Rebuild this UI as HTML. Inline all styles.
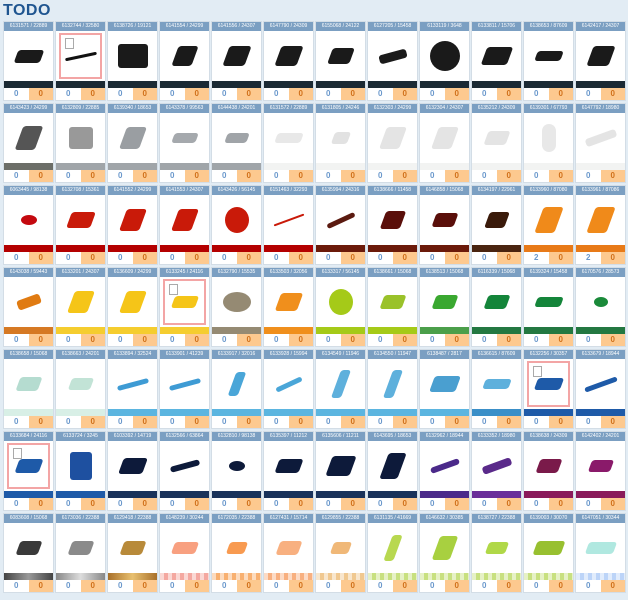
<!DOCTYPE html>
<html><head><meta charset="utf-8"><style>
*{margin:0;padding:0;box-sizing:border-box}
html,body{width:628px;height:600px;overflow:hidden;background:#e2ecf4;font-family:"Liberation Sans",sans-serif}
h1{position:absolute;left:3px;top:2px;font-size:16px;font-weight:bold;color:#1f5590;letter-spacing:0.5px}
.g{position:absolute;left:4px;top:22px;display:grid;grid-template-columns:repeat(12,49px);grid-auto-rows:78px;column-gap:3px;row-gap:4px}
.c{background:#fff;display:flex;flex-direction:column;box-shadow:0 0 0 1px #d3dde6}
.h{height:9px;background:#7b9fc2;color:#fff;font-size:5px;line-height:9px;text-align:center;white-space:nowrap;overflow:hidden}
.i{height:50px;background:#fff;position:relative;display:flex;align-items:center;justify-content:center}
.i i{display:block;width:26px;height:13px;border-radius:3px;transform:skewX(-20deg)}
.p{position:absolute;left:3px;top:2px;right:3px;bottom:2px;border:2px solid #f3a5a5;background:#fff}
.p::after{content:"";position:absolute;left:4px;top:3px;width:7px;height:9px;border:1px solid #aaa}
.b{height:7px}
.ck{background:repeating-linear-gradient(90deg,rgba(255,255,255,.55) 0 4px,transparent 4px 8px)}
.n{height:12px;display:flex;font-size:8px;font-weight:bold;line-height:12px;text-align:center}
.n span:first-child{flex:1;color:#6a98cc;background:#fff}
.n span:last-child{flex:1;color:#d0701a;background:#fdc98f}
</style></head><body>
<h1>TODO</h1>
<div class="g">
<!-- row 1 -->
<div class="c"><div class="h">6131571 / 22889</div><div class="i"><i style="background:#1a1a1a"></i></div><div class="b" style="background:#1b2a34"></div><div class="n"><span>0</span><span>0</span></div></div>
<div class="c"><div class="h">6132744 / 32580</div><div class="i"><div class="p"></div><i style="background:#111;height:3px;width:32px;position:relative;transform:rotate(-12deg)"></i></div><div class="b" style="background:#1b2a34"></div><div class="n"><span>0</span><span>0</span></div></div>
<div class="c"><div class="h">6138726 / 19121</div><div class="i"><i style="background:#1a1a1a;width:30px;height:24px;transform:none"></i></div><div class="b" style="background:#1b2a34"></div><div class="n"><span>0</span><span>0</span></div></div>
<div class="c"><div class="h">6141554 / 24299</div><div class="i"><i style="background:#1a1a1a;width:20px;height:20px"></i></div><div class="b" style="background:#1b2a34"></div><div class="n"><span>0</span><span>0</span></div></div>
<div class="c"><div class="h">6141556 / 24307</div><div class="i"><i style="background:#1a1a1a;width:22px;height:20px"></i></div><div class="b" style="background:#1b2a34"></div><div class="n"><span>0</span><span>0</span></div></div>
<div class="c"><div class="h">6147790 / 24309</div><div class="i"><i style="background:#1a1a1a;width:22px;height:20px"></i></div><div class="b" style="background:#1b2a34"></div><div class="n"><span>0</span><span>0</span></div></div>
<div class="c"><div class="h">6155068 / 24122</div><div class="i"><i style="background:#1a1a1a;width:22px;height:16px"></i></div><div class="b" style="background:#1b2a34"></div><div class="n"><span>0</span><span>0</span></div></div>
<div class="c"><div class="h">6127205 / 15458</div><div class="i"><i style="background:#1a1a1a;width:28px;height:9px;transform:rotate(-15deg)"></i></div><div class="b" style="background:#1b2a34"></div><div class="n"><span>0</span><span>0</span></div></div>
<div class="c"><div class="h">6133119 / 3648</div><div class="i"><i style="background:#1a1a1a;width:30px;height:30px;border-radius:50%;transform:none"></i></div><div class="b" style="background:#1b2a34"></div><div class="n"><span>0</span><span>0</span></div></div>
<div class="c"><div class="h">6133811 / 15706</div><div class="i"><i style="background:#1a1a1a;width:26px;height:18px"></i></div><div class="b" style="background:#1b2a34"></div><div class="n"><span>0</span><span>0</span></div></div>
<div class="c"><div class="h">6138653 / 87609</div><div class="i"><i style="background:#1a1a1a;width:26px;height:10px"></i></div><div class="b" style="background:#1b2a34"></div><div class="n"><span>0</span><span>0</span></div></div>
<div class="c"><div class="h">6142417 / 24307</div><div class="i"><i style="background:#1a1a1a;width:22px;height:20px"></i></div><div class="b" style="background:#1b2a34"></div><div class="n"><span>0</span><span>0</span></div></div>
<!-- row 2 -->
<div class="c"><div class="h">6143423 / 24299</div><div class="i"><i style="background:#555;width:20px;height:24px"></i></div><div class="b" style="background:#6c6e68"></div><div class="n"><span>0</span><span>0</span></div></div>
<div class="c"><div class="h">6132809 / 22885</div><div class="i"><i style="background:#999;width:24px;height:22px;transform:none"></i></div><div class="b" style="background:#a0a5a9"></div><div class="n"><span>0</span><span>0</span></div></div>
<div class="c"><div class="h">6139340 / 18653</div><div class="i"><i style="background:#9a9ea2;width:20px;height:22px"></i></div><div class="b" style="background:#a0a5a9"></div><div class="n"><span>0</span><span>0</span></div></div>
<div class="c"><div class="h">6143378 / 99563</div><div class="i"><i style="background:#a5a9ad;width:24px;height:10px"></i></div><div class="b" style="background:#a0a5a9"></div><div class="n"><span>0</span><span>0</span></div></div>
<div class="c"><div class="h">6144438 / 24201</div><div class="i"><i style="background:#a0a4a8;width:22px;height:10px"></i></div><div class="b" style="background:#a0a5a9"></div><div class="n"><span>0</span><span>0</span></div></div>
<div class="c"><div class="h">6131572 / 22889</div><div class="i"><i style="background:#e8e8e8;width:26px;height:10px"></i></div><div class="b" style="background:#f2f3f2"></div><div class="n"><span>0</span><span>0</span></div></div>
<div class="c"><div class="h">6131805 / 24246</div><div class="i"><i style="background:#e2e2e2;width:16px;height:12px"></i></div><div class="b" style="background:#f2f3f2"></div><div class="n"><span>0</span><span>0</span></div></div>
<div class="c"><div class="h">6132303 / 24299</div><div class="i"><i style="background:#e4e4e4;width:20px;height:22px"></i></div><div class="b" style="background:#f2f3f2"></div><div class="n"><span>0</span><span>0</span></div></div>
<div class="c"><div class="h">6132304 / 24307</div><div class="i"><i style="background:#e4e4e4;width:20px;height:22px"></i></div><div class="b" style="background:#f2f3f2"></div><div class="n"><span>0</span><span>0</span></div></div>
<div class="c"><div class="h">6135212 / 24309</div><div class="i"><i style="background:#e4e4e4;width:22px;height:14px"></i></div><div class="b" style="background:#f2f3f2"></div><div class="n"><span>0</span><span>0</span></div></div>
<div class="c"><div class="h">6139301 / 67793</div><div class="i"><i style="background:#e8e8e8;width:14px;height:28px;border-radius:7px;transform:none"></i></div><div class="b" style="background:#f2f3f2"></div><div class="n"><span>0</span><span>0</span></div></div>
<div class="c"><div class="h">6147792 / 18980</div><div class="i"><i style="background:#e4e4e4;width:32px;height:8px;transform:rotate(-20deg)"></i></div><div class="b" style="background:#f2f3f2"></div><div class="n"><span>0</span><span>0</span></div></div>
<!-- row 3 -->
<div class="c"><div class="h">6063445 / 98138</div><div class="i"><i style="background:#c4090f;width:16px;height:10px;border-radius:50%;transform:none"></i></div><div class="b" style="background:#b40000"></div><div class="n"><span>0</span><span>0</span></div></div>
<div class="c"><div class="h">6132708 / 15361</div><div class="i"><i style="background:#c91a09;width:24px;height:16px"></i></div><div class="b" style="background:#b40000"></div><div class="n"><span>0</span><span>0</span></div></div>
<div class="c"><div class="h">6141552 / 24299</div><div class="i"><i style="background:#c91a09;width:20px;height:22px"></i></div><div class="b" style="background:#b40000"></div><div class="n"><span>0</span><span>0</span></div></div>
<div class="c"><div class="h">6141553 / 24307</div><div class="i"><i style="background:#c91a09;width:20px;height:22px"></i></div><div class="b" style="background:#b40000"></div><div class="n"><span>0</span><span>0</span></div></div>
<div class="c"><div class="h">6143426 / 56145</div><div class="i"><i style="background:#c91a09;width:24px;height:26px;border-radius:50%;transform:none"></i></div><div class="b" style="background:#b40000"></div><div class="n"><span>0</span><span>0</span></div></div>
<div class="c"><div class="h">6151463 / 32293</div><div class="i"><i style="background:#c91a09;width:32px;height:2px;transform:rotate(-20deg)"></i></div><div class="b" style="background:#b40000"></div><div class="n"><span>0</span><span>0</span></div></div>
<div class="c"><div class="h">6135994 / 24316</div><div class="i"><i style="background:#5b1a10;width:30px;height:5px;transform:rotate(-25deg)"></i></div><div class="b" style="background:#6b1a0a"></div><div class="n"><span>0</span><span>0</span></div></div>
<div class="c"><div class="h">6138666 / 11458</div><div class="i"><i style="background:#5a0f0a;width:20px;height:18px"></i></div><div class="b" style="background:#6b1a0a"></div><div class="n"><span>0</span><span>0</span></div></div>
<div class="c"><div class="h">6146858 / 15068</div><div class="i"><i style="background:#5a0f0a;width:22px;height:14px"></i></div><div class="b" style="background:#6b1a0a"></div><div class="n"><span>0</span><span>0</span></div></div>
<div class="c"><div class="h">6134197 / 22961</div><div class="i"><i style="background:#3a1a0a;width:20px;height:16px"></i></div><div class="b" style="background:#4a2410"></div><div class="n"><span>0</span><span>0</span></div></div>
<div class="c"><div class="h">6133960 / 87080</div><div class="i"><i style="background:#f08a1a;width:20px;height:26px"></i></div><div class="b" style="background:#e87a18"></div><div class="n"><span>2</span><span>0</span></div></div>
<div class="c"><div class="h">6133961 / 87086</div><div class="i"><i style="background:#f08a1a;width:20px;height:26px"></i></div><div class="b" style="background:#e87a18"></div><div class="n"><span>2</span><span>0</span></div></div>
<!-- row 4 -->
<div class="c"><div class="h">6143038 / 59443</div><div class="i"><i style="background:#e07b12;width:24px;height:10px;transform:rotate(-20deg)"></i></div><div class="b" style="background:#d67923"></div><div class="n"><span>0</span><span>0</span></div></div>
<div class="c"><div class="h">6133201 / 24307</div><div class="i"><i style="background:#f5c518;width:20px;height:22px"></i></div><div class="b" style="background:#f5cd2f"></div><div class="n"><span>0</span><span>0</span></div></div>
<div class="c"><div class="h">6136609 / 24299</div><div class="i"><i style="background:#f5c518;width:20px;height:22px"></i></div><div class="b" style="background:#f5cd2f"></div><div class="n"><span>0</span><span>0</span></div></div>
<div class="c"><div class="h">6133245 / 24116</div><div class="i"><div class="p"></div><i style="background:#f5c518;width:24px;height:12px;position:relative"></i></div><div class="b" style="background:#f5cd2f"></div><div class="n"><span>0</span><span>0</span></div></div>
<div class="c"><div class="h">6132790 / 15535</div><div class="i"><i style="background:#958a73;width:28px;height:20px;border-radius:50%;transform:none"></i></div><div class="b" style="background:#958a73"></div><div class="n"><span>0</span><span>0</span></div></div>
<div class="c"><div class="h">6133503 / 32056</div><div class="i"><i style="background:#f08f1c;width:22px;height:18px"></i></div><div class="b" style="background:#f08f1c"></div><div class="n"><span>0</span><span>0</span></div></div>
<div class="c"><div class="h">6133317 / 56145</div><div class="i"><i style="background:#a5ca18;width:24px;height:26px;border-radius:50%;transform:none"></i></div><div class="b" style="background:#a5ca18"></div><div class="n"><span>0</span><span>0</span></div></div>
<div class="c"><div class="h">6138661 / 15068</div><div class="i"><i style="background:#9ac22a;width:22px;height:14px"></i></div><div class="b" style="background:#a5ca18"></div><div class="n"><span>0</span><span>0</span></div></div>
<div class="c"><div class="h">6138513 / 15068</div><div class="i"><i style="background:#3aa830;width:22px;height:14px"></i></div><div class="b" style="background:#4b9f4a"></div><div class="n"><span>0</span><span>0</span></div></div>
<div class="c"><div class="h">6116339 / 15068</div><div class="i"><i style="background:#14853a;width:22px;height:14px"></i></div><div class="b" style="background:#237841"></div><div class="n"><span>0</span><span>0</span></div></div>
<div class="c"><div class="h">6139324 / 15458</div><div class="i"><i style="background:#14853a;width:26px;height:10px"></i></div><div class="b" style="background:#237841"></div><div class="n"><span>0</span><span>0</span></div></div>
<div class="c"><div class="h">6170576 / 28573</div><div class="i"><i style="background:#1a8a3a;width:14px;height:10px;border-radius:50%;transform:none"></i></div><div class="b" style="background:#237841"></div><div class="n"><span>0</span><span>0</span></div></div>
<!-- row 5 -->
<div class="c"><div class="h">6138658 / 15068</div><div class="i"><i style="background:#b5dcd0;width:22px;height:14px"></i></div><div class="b" style="background:#d8efe6"></div><div class="n"><span>0</span><span>0</span></div></div>
<div class="c"><div class="h">6138663 / 24201</div><div class="i"><i style="background:#c2e3d6;width:22px;height:12px"></i></div><div class="b" style="background:#d8efe6"></div><div class="n"><span>0</span><span>0</span></div></div>
<div class="c"><div class="h">6133894 / 32524</div><div class="i"><i style="background:#3e9bd4;width:32px;height:5px;transform:rotate(-15deg)"></i></div><div class="b" style="background:#5bb5e0"></div><div class="n"><span>0</span><span>0</span></div></div>
<div class="c"><div class="h">6133901 / 41239</div><div class="i"><i style="background:#3e9bd4;width:32px;height:5px;transform:rotate(-15deg)"></i></div><div class="b" style="background:#5bb5e0"></div><div class="n"><span>0</span><span>0</span></div></div>
<div class="c"><div class="h">6133917 / 32016</div><div class="i"><i style="background:#4aa6d8;width:10px;height:24px"></i></div><div class="b" style="background:#5bb5e0"></div><div class="n"><span>0</span><span>0</span></div></div>
<div class="c"><div class="h">6133928 / 15994</div><div class="i"><i style="background:#4aa6d8;width:28px;height:5px;transform:rotate(-25deg)"></i></div><div class="b" style="background:#5bb5e0"></div><div class="n"><span>0</span><span>0</span></div></div>
<div class="c"><div class="h">6134549 / 11946</div><div class="i"><i style="background:#5eb0dc;width:10px;height:28px"></i></div><div class="b" style="background:#5bb5e0"></div><div class="n"><span>0</span><span>0</span></div></div>
<div class="c"><div class="h">6134550 / 11947</div><div class="i"><i style="background:#5eb0dc;width:10px;height:28px"></i></div><div class="b" style="background:#5bb5e0"></div><div class="n"><span>0</span><span>0</span></div></div>
<div class="c"><div class="h">6138487 / 2817</div><div class="i"><i style="background:#4a9fd0;width:26px;height:16px"></i></div><div class="b" style="background:#5bb5e0"></div><div class="n"><span>0</span><span>0</span></div></div>
<div class="c"><div class="h">6136615 / 87609</div><div class="i"><i style="background:#5eb0dc;width:26px;height:10px"></i></div><div class="b" style="background:#3a8fc8"></div><div class="n"><span>0</span><span>0</span></div></div>
<div class="c"><div class="h">6132256 / 30357</div><div class="i"><div class="p"></div><i style="background:#1e5aa8;width:26px;height:12px;position:relative"></i></div><div class="b" style="background:#1e5aa8"></div><div class="n"><span>0</span><span>0</span></div></div>
<div class="c"><div class="h">6133679 / 18944</div><div class="i"><i style="background:#1e5aa8;width:34px;height:5px;transform:rotate(-20deg)"></i></div><div class="b" style="background:#1e5aa8"></div><div class="n"><span>0</span><span>0</span></div></div>
<!-- row 6 -->
<div class="c"><div class="h">6133684 / 24116</div><div class="i"><div class="p"></div><i style="background:#1e5aa8;width:24px;height:14px;position:relative"></i></div><div class="b" style="background:#1e5aa8"></div><div class="n"><span>0</span><span>0</span></div></div>
<div class="c"><div class="h">6133724 / 3245</div><div class="i"><i style="background:#1e50a0;width:22px;height:28px;transform:none"></i></div><div class="b" style="background:#1e5aa8"></div><div class="n"><span>0</span><span>0</span></div></div>
<div class="c"><div class="h">6103392 / 14719</div><div class="i"><i style="background:#0d1a3a;width:24px;height:16px"></i></div><div class="b" style="background:#19325a"></div><div class="n"><span>0</span><span>0</span></div></div>
<div class="c"><div class="h">6132566 / 63864</div><div class="i"><i style="background:#0d1a3a;width:30px;height:6px;transform:rotate(-15deg)"></i></div><div class="b" style="background:#19325a"></div><div class="n"><span>0</span><span>0</span></div></div>
<div class="c"><div class="h">6132810 / 98138</div><div class="i"><i style="background:#0d1a3a;width:16px;height:10px;border-radius:50%;transform:none"></i></div><div class="b" style="background:#19325a"></div><div class="n"><span>0</span><span>0</span></div></div>
<div class="c"><div class="h">6135397 / 11212</div><div class="i"><i style="background:#0d1a3a;width:24px;height:14px"></i></div><div class="b" style="background:#19325a"></div><div class="n"><span>0</span><span>0</span></div></div>
<div class="c"><div class="h">6135606 / 11211</div><div class="i"><i style="background:#0d1a3a;width:24px;height:20px"></i></div><div class="b" style="background:#19325a"></div><div class="n"><span>0</span><span>0</span></div></div>
<div class="c"><div class="h">6143695 / 18653</div><div class="i"><i style="background:#0d1a3a;width:18px;height:26px"></i></div><div class="b" style="background:#19325a"></div><div class="n"><span>0</span><span>0</span></div></div>
<div class="c"><div class="h">6132962 / 18944</div><div class="i"><i style="background:#4b2a8a;width:30px;height:6px;transform:rotate(-20deg)"></i></div><div class="b" style="background:#4b2a8a"></div><div class="n"><span>0</span><span>0</span></div></div>
<div class="c"><div class="h">6133352 / 18980</div><div class="i"><i style="background:#5a2a8a;width:30px;height:8px;transform:rotate(-20deg)"></i></div><div class="b" style="background:#6a2e9a"></div><div class="n"><span>0</span><span>0</span></div></div>
<div class="c"><div class="h">6138638 / 24309</div><div class="i"><i style="background:#7a1a4a;width:22px;height:14px"></i></div><div class="b" style="background:#8a1a5a"></div><div class="n"><span>0</span><span>0</span></div></div>
<div class="c"><div class="h">6142402 / 24201</div><div class="i"><i style="background:#8a1a6a;width:22px;height:12px"></i></div><div class="b" style="background:#8a1a5a"></div><div class="n"><span>0</span><span>0</span></div></div>
<!-- row 7 -->
<div class="c"><div class="h">6083608 / 15068</div><div class="i"><i style="background:#3a3a3a;width:22px;height:14px"></i></div><div class="b" style="background:linear-gradient(90deg,#444,#999,#444)"></div><div class="n"><span>0</span><span>0</span></div></div>
<div class="c"><div class="h">6173036 / 22388</div><div class="i"><i style="background:#8a8a8a;width:22px;height:14px"></i></div><div class="b" style="background:linear-gradient(90deg,#888,#ddd,#888)"></div><div class="n"><span>0</span><span>0</span></div></div>
<div class="c"><div class="h">6129418 / 22388</div><div class="i"><i style="background:#b88a3a;width:22px;height:14px"></i></div><div class="b" style="background:linear-gradient(90deg,#a8702a,#e8c070,#a8702a)"></div><div class="n"><span>0</span><span>0</span></div></div>
<div class="c"><div class="h">6148239 / 30244</div><div class="i"><i style="background:#f8a080;width:24px;height:12px"></i></div><div class="b ck" style="background-color:#f4a8a0"></div><div class="n"><span>0</span><span>0</span></div></div>
<div class="c"><div class="h">6172035 / 22388</div><div class="i"><i style="background:#f89a50;width:18px;height:12px"></i></div><div class="b ck" style="background-color:#f8b070"></div><div class="n"><span>0</span><span>0</span></div></div>
<div class="c"><div class="h">6127431 / 15714</div><div class="i"><i style="background:#f8b080;width:22px;height:14px"></i></div><div class="b ck" style="background-color:#f8b080"></div><div class="n"><span>0</span><span>0</span></div></div>
<div class="c"><div class="h">6129855 / 22388</div><div class="i"><i style="background:#f0b878;width:18px;height:12px"></i></div><div class="b ck" style="background-color:#f0c890"></div><div class="n"><span>0</span><span>0</span></div></div>
<div class="c"><div class="h">6131135 / 41669</div><div class="i"><i style="background:#b8d850;width:10px;height:26px"></i></div><div class="b ck" style="background-color:#c8e080"></div><div class="n"><span>0</span><span>0</span></div></div>
<div class="c"><div class="h">6146632 / 30385</div><div class="i"><i style="background:#a8d040;width:18px;height:24px"></i></div><div class="b ck" style="background-color:#c8e080"></div><div class="n"><span>0</span><span>0</span></div></div>
<div class="c"><div class="h">6138727 / 22388</div><div class="i"><i style="background:#b0d848;width:20px;height:12px"></i></div><div class="b ck" style="background-color:#c8e080"></div><div class="n"><span>0</span><span>0</span></div></div>
<div class="c"><div class="h">6139003 / 30070</div><div class="i"><i style="background:#98c030;width:28px;height:14px"></i></div><div class="b ck" style="background-color:#c8e080"></div><div class="n"><span>0</span><span>0</span></div></div>
<div class="c"><div class="h">6147051 / 30344</div><div class="i"><i style="background:#b0e8e0;width:28px;height:12px"></i></div><div class="b ck" style="background-color:#bcd4f8"></div><div class="n"><span>0</span><span>0</span></div></div>
</div>
</body></html>
